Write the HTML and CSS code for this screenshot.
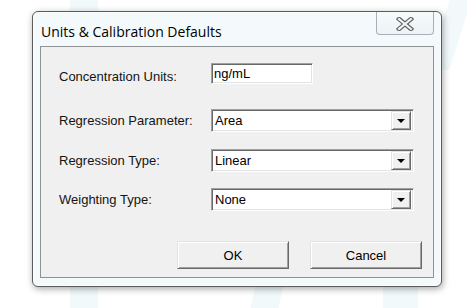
FILE: index.html
```html
<!DOCTYPE html>
<html>
<head>
<meta charset="utf-8">
<link rel="stylesheet" href="styles.css">
</head>
<body>
<div class="backdrop">
  <div class="mark mark-a"></div>
  <div class="mark mark-b"></div>
  <div class="mark mark-c"></div>
  <div class="mark mark-d"></div>
</div>
<div class="window">
  <div class="titlebar">
    <span class="title">Units &amp; Calibration Defaults</span>
    <div class="close">
      <svg width="20" height="14" viewBox="0 0 20 14">
        <path d="M4 2 L16 12 M16 2 L4 12" stroke="#5e5e5e" stroke-width="4.4" stroke-linecap="square" fill="none"/>
        <path d="M4 2 L16 12 M16 2 L4 12" stroke="#f4f4f4" stroke-width="2.2" stroke-linecap="square" fill="none"/>
      </svg>
    </div>
  </div>
  <div class="panel">
    <div class="row row-units">
      <label class="label">Concentration Units:</label>
      <div class="field text-field">ng/mL</div>
    </div>
    <div class="row row-param">
      <label class="label">Regression Parameter:</label>
      <div class="field combo"><span class="value">Area</span><span class="drop"><span class="tri"></span></span></div>
    </div>
    <div class="row row-type">
      <label class="label">Regression Type:</label>
      <div class="field combo"><span class="value">Linear</span><span class="drop"><span class="tri"></span></span></div>
    </div>
    <div class="row row-weight">
      <label class="label">Weighting Type:</label>
      <div class="field combo"><span class="value">None</span><span class="drop"><span class="tri"></span></span></div>
    </div>
    <div class="buttons">
      <div class="btn">OK</div>
      <div class="btn">Cancel</div>
    </div>
  </div>
</div>
</body>
</html>
```

FILE: styles.css
```css
html, body {
  margin: 0;
  padding: 0;
}
body {
  width: 467px;
  height: 308px;
  overflow: hidden;
  background: #ffffff;
  position: relative;
  font-family: "Liberation Sans", Arial, sans-serif;
  font-size: 13px;
  color: #000;
}
.backdrop {
  position: absolute;
  inset: 0;
  z-index: 0;
}
.mark {
  position: absolute;
  background: #f1f9fb;
}
.mark-a {
  left: 70px;
  top: 0;
  width: 28px;
  height: 308px;
}
.mark-b {
  left: 262px;
  top: 200px;
  width: 28px;
  height: 108px;
  transform: skewX(-12deg);
}
.mark-c {
  left: 383px;
  top: 200px;
  width: 35px;
  height: 108px;
}
.mark-d {
  left: 440px;
  top: -10px;
  width: 22px;
  height: 80px;
  transform: skewX(-18deg);
}
.window {
  position: relative;
  z-index: 1;
  margin: 11px 0 0 32px;
  width: 394px;
  height: 266px;
  border: 1px solid #5b5b5b;
  border-radius: 6px;
  background: #f4fafc;
  box-shadow: 1px 2px 7px rgba(0, 0, 0, 0.35), inset 0 0 0 1px #fdfefe;
  display: flex;
  flex-direction: column;
  padding: 0 7px 8px 7px;
  box-sizing: content-box;
}
.titlebar {
  height: 34px;
  display: flex;
  align-items: flex-start;
  justify-content: space-between;
}
.title {
  font-family: "Open Sans", "Noto Sans", sans-serif;
  font-size: 14px;
  color: #000;
  margin-top: 10px;
  margin-left: 1px;
  letter-spacing: 0px;
}
.close {
  width: 56px;
  height: 22px;
  margin-right: 0;
  border: 1px solid #a7b0b6;
  border-top: none;
  border-radius: 0 0 4px 4px;
  background: linear-gradient(#f6fafb, #edf3f6);
  display: flex;
  align-items: center;
  justify-content: center;
}
.close svg {
  display: block;
  margin-top: 1px;
}
.panel {
  flex: 1;
  border: 1px solid #8f9396;
  background: #f0f0f0;
  padding: 16px 11px 0 18px;
  display: flex;
  flex-direction: column;
}
.row {
  display: flex;
  align-items: center;
}
.label {
  width: 152px;
  flex: none;
  color: #141414;
}
.row-units .label {
  margin-top: 5px;
}
.row-param {
  margin-top: 25px;
}
.row-type {
  margin-top: 17px;
}
.row-weight {
  margin-top: 16px;
}
.field {
  box-sizing: border-box;
  background: #fff;
  border-top: 1px solid #a0a0a0;
  border-left: 1px solid #a0a0a0;
  border-right: 1px solid #ffffff;
  border-bottom: 1px solid #ffffff;
  box-shadow: inset 1px 1px 0 #696969, inset -1px -1px 0 #e3e3e3;
  display: flex;
  align-items: center;
}
.text-field {
  width: 102px;
  height: 21px;
  padding-left: 2px;
  padding-bottom: 1px;
}
.combo {
  width: 203px;
  height: 23px;
  padding: 2px 2px 2px 2px;
}
.value {
  flex: 1;
  padding-left: 1px;
}
.drop {
  width: 20px;
  height: 19px;
  box-sizing: border-box;
  background: #f0f0f0;
  border-top: 1px solid #e3e3e3;
  border-left: 1px solid #e3e3e3;
  border-right: 1px solid #696969;
  border-bottom: 1px solid #696969;
  box-shadow: inset 1px 1px 0 #ffffff, inset -1px -1px 0 #a0a0a0;
  display: flex;
  align-items: center;
  justify-content: center;
}
.tri {
  width: 0;
  height: 0;
  border-left: 4px solid transparent;
  border-right: 4px solid transparent;
  border-top: 4px solid #000;
  margin-top: 1px;
}
.buttons {
  display: flex;
  justify-content: flex-end;
  gap: 21px;
  margin-top: 30px;
}
.btn {
  box-sizing: border-box;
  width: 112px;
  height: 28px;
  background: #f0f0f0;
  border-top: 1px solid #e3e3e3;
  border-left: 1px solid #e3e3e3;
  border-right: 1px solid #696969;
  border-bottom: 1px solid #696969;
  box-shadow: inset 1px 1px 0 #ffffff, inset -1px -1px 0 #a0a0a0;
  display: flex;
  align-items: center;
  justify-content: center;
  color: #000;
}
```
